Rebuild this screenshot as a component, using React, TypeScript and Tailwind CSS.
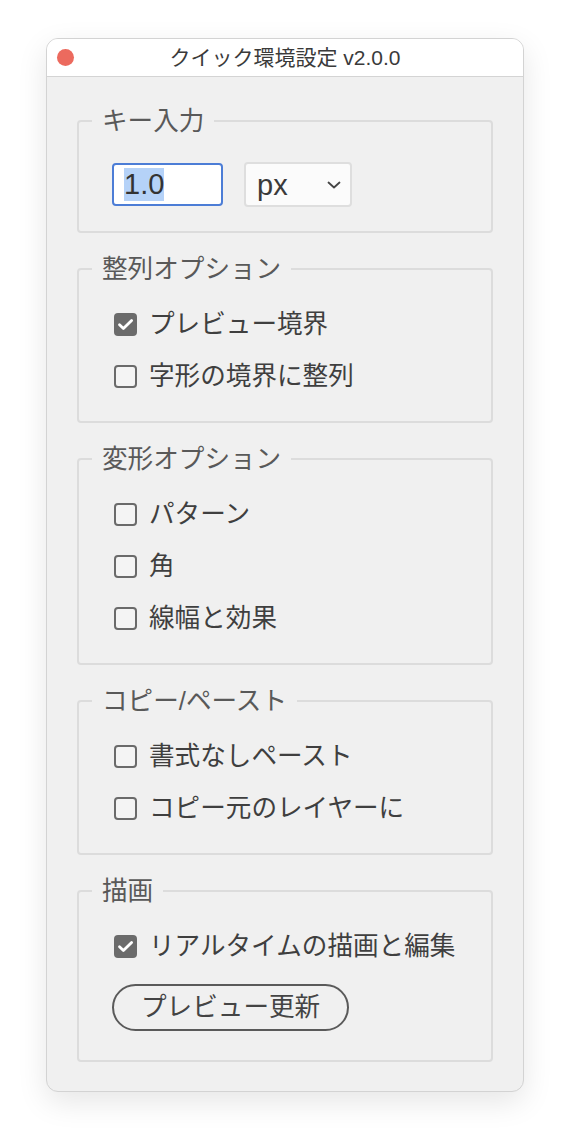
import React from "react";

const FONT = { fontFamily: '"Liberation Sans", "Noto Sans CJK JP", sans-serif' };

function CheckBox({ checked }: { checked: boolean }) {
  if (checked) {
    return (
      <span className="ml-[2px] flex h-[23px] w-[23px] shrink-0 items-center justify-center rounded-[4px] bg-[#6b6b6b]">
        <svg width="23" height="23" viewBox="0 0 23 23" fill="none">
          <path d="M5.5 11.8 L9.4 15.6 L17.6 7.4" stroke="#ffffff" strokeWidth="2.8" strokeLinecap="round" strokeLinejoin="round" />
        </svg>
      </span>
    );
  }
  return <span className="ml-[2px] block h-[23px] w-[23px] shrink-0 rounded-[4px] border-2 border-[#6a6a6a] bg-[#f4f4f4]" />;
}

function Option({ label, checked = false }: { label: string; checked?: boolean }) {
  return (
    <label className="flex h-[36px] items-center gap-[12px]">
      <CheckBox checked={checked} />
      <span className="text-[25.6px] leading-[36px] text-[#3f3f3f]">{label}</span>
    </label>
  );
}

function Group({
  title,
  children,
  className = "",
}: {
  title: string;
  children: React.ReactNode;
  className?: string;
}) {
  return (
    <fieldset className={`rounded-[4px] border-2 border-[#dcdcdc] px-[13px] ${className}`}>
      <legend className="px-[10px] text-[25.6px] leading-[36px] text-[#595959]">{title}</legend>
      <div className="pl-[20px]">{children}</div>
    </fieldset>
  );
}

export default function App() {
  return (
    <div className="min-h-[1146px] bg-white pt-[38px]" style={FONT}>
      <div className="mx-auto w-[478px] overflow-hidden rounded-[12px] border border-[#d3d3d3] bg-[#f0f0f0] shadow-[0_10px_30px_rgba(0,0,0,0.10)]">
        {/* Title bar */}
        <div className="grid h-[38px] grid-cols-[1fr_auto_1fr] items-center border-b border-[#d4d4d4] bg-white">
          <div className="pl-[10px]">
            <span className="block h-[17px] w-[17px] rounded-full bg-[#ec6a5e]" />
          </div>
          <div className="text-[21px] leading-[37px] text-[#3a3a3a]">クイック環境設定 v2.0.0</div>
          <div />
        </div>

        {/* Content */}
        <div className="flex flex-col gap-[18px] px-[30px] pb-[29px] pt-[26px]">
          <Group title="キー入力" className="pb-[24px]">
            <div className="flex h-[45px] items-center pt-0 mt-[23px]">
              <div className="flex h-[43px] w-[111px] items-center rounded-[4px] border-2 border-[#4c7dd6] bg-white pl-[10px]">
                <span className="inline-block bg-[#b5d2f8] text-[29px] leading-[33px] text-[#333333]">1.0</span>
              </div>
              <div className="ml-[21px] flex h-[45px] w-[108px] items-center justify-between rounded-[4px] border-2 border-[#dedede] bg-[#fbfbfb] pl-[11px] pr-[9px]">
                <span className="text-[29px] leading-[40px] text-[#3a3a3a]">px</span>
                <svg width="14" height="8" viewBox="0 0 14 8" fill="none">
                  <path d="M1.5 1.5 L7 6.5 L12.5 1.5" stroke="#444444" strokeWidth="1.8" strokeLinecap="round" strokeLinejoin="round" />
                </svg>
              </div>
            </div>
          </Group>

          <Group title="整列オプション" className="pb-[27px]">
            <div className="mt-[19px] flex flex-col gap-[16px]">
              <Option label="プレビュー境界" checked />
              <Option label="字形の境界に整列" />
            </div>
          </Group>

          <Group title="変形オプション" className="pb-[27px]">
            <div className="mt-[19px] flex flex-col gap-[16px]">
              <Option label="パターン" />
              <Option label="角" />
              <Option label="線幅と効果" />
            </div>
          </Group>

          <Group title="コピー/ペースト" className="pb-[27px]">
            <div className="mt-[19px] flex flex-col gap-[16px]">
              <Option label="書式なしペースト" />
              <Option label="コピー元のレイヤーに" />
            </div>
          </Group>

          <Group title="描画" className="pb-[29px]">
            <div className="mt-[19px] flex flex-col items-start">
              <Option label="リアルタイムの描画と編集" checked />
              <button
                type="button"
                className="mt-[20px] h-[47px] rounded-full border-2 border-[#5a5a5a] px-[27px] text-[25.6px] leading-[43px] text-[#444444]"
              >
                プレビュー更新
              </button>
            </div>
          </Group>
        </div>
      </div>
    </div>
  );
}
